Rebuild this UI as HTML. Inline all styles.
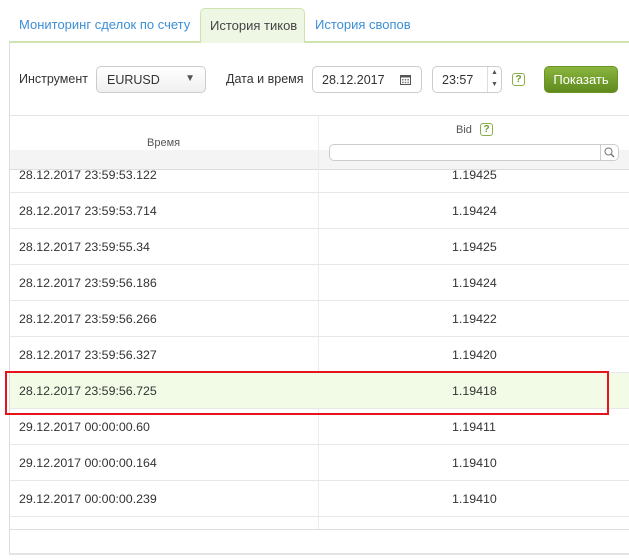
<!DOCTYPE html>
<html><head><meta charset="utf-8"><style>
*{box-sizing:border-box;margin:0;padding:0}
body{width:629px;height:560px;overflow:hidden;background:#fff;font-family:"Liberation Sans",Arial,sans-serif;font-size:12px;color:#333;position:relative}
.a{position:absolute;white-space:nowrap}
.tab{position:absolute;top:8px;height:34px;line-height:34px;font-size:13px;color:#3d8fd6;padding:0 10px;white-space:nowrap}
.in{position:absolute;border:1px solid #ccc;border-radius:5px;background:#fff;font-size:12.5px;color:#333;white-space:nowrap}
.row{position:absolute;left:10px;width:640px;height:36px;border-bottom:1px solid #e8e8e8;font-size:12.4px;color:#333}
.row span{position:absolute;top:0;line-height:36px;white-space:nowrap}
.q{position:absolute;width:13px;height:13px;border:1px solid #8ab04a;border-radius:3px;color:#6e9a2e;font-size:10px;line-height:11px;text-align:center;font-weight:bold}
</style></head><body>
<div class="a" style="left:9px;top:41px;width:640px;height:2px;background:#cfe3b0"></div>
<div class="tab" style="left:9px">Мониторинг сделок по счету</div>
<div class="tab" style="left:200px;width:105px;background:#eef6e4;border:1px solid #cfe3b0;border-bottom:none;border-radius:5px 5px 0 0;color:#444;height:35px;padding:0 9px">История тиков</div>
<div class="tab" style="left:305px">История свопов</div>
<div class="a" style="left:9px;top:43px;width:1px;height:512px;background:#ddd"></div>
<div class="a" style="left:9px;top:553px;width:640px;height:2px;background:#e4e4e4"></div>

<div class="a" style="left:19px;top:72px;font-size:12.5px">Инструмент</div>
<div class="in" style="left:96px;top:66px;width:110px;height:27px;background:linear-gradient(#fff,#f0f0f0);padding:6px 10px">EURUSD<span class="a" style="right:10px;top:6px;font-size:10px;color:#555">▼</span></div>
<div class="a" style="left:226px;top:72px;font-size:12.5px">Дата и время</div>
<div class="in" style="left:312px;top:66px;width:110px;height:27px;padding:6px 9px">28.12.2017
<svg class="a" style="left:87px;top:7px" width="11" height="11" viewBox="0 0 11 11"><rect x="0.5" y="1.5" width="10" height="9" fill="#fff" stroke="#555"/><rect x="0.5" y="1.5" width="10" height="2" fill="#555"/><g fill="#777"><rect x="2" y="5" width="1.5" height="1.5"/><rect x="4.7" y="5" width="1.5" height="1.5"/><rect x="7.4" y="5" width="1.5" height="1.5"/><rect x="2" y="7.7" width="1.5" height="1.5"/><rect x="4.7" y="7.7" width="1.5" height="1.5"/><rect x="7.4" y="7.7" width="1.5" height="1.5"/></g></svg></div>
<div class="in" style="left:432px;top:66px;width:70px;height:27px;padding:6px 9px">23:57
<div class="a" style="right:0;top:0;width:14px;height:25px;border-left:1px solid #ddd;font-size:7px;color:#555;text-align:center;line-height:12px">▲<br>▼</div></div>
<div class="q" style="left:512px;top:73px">?</div>
<div class="a" style="left:544px;top:66px;width:74px;height:27px;border-radius:5px;background:linear-gradient(#8ab53e,#5f8a1e);border:1px solid #6a9526;color:#fff;font-size:13px;text-align:center;line-height:25px">Показать</div>

<div class="a" style="left:10px;top:115px;width:640px;height:1px;background:#e4e4e4"></div>
<div class="a" style="left:10px;top:150px;width:640px;height:19px;background:#f4f4f4"></div>
<div class="a" style="left:10px;top:169px;width:640px;height:1px;background:#ddd"></div>
<div class="a" style="left:318px;top:115px;width:1px;height:414px;background:#ececec"></div>
<div class="a" style="left:147px;top:137px;font-size:11px;color:#555">Время</div>
<div class="a" style="left:456px;top:124px;font-size:11px;color:#555">Bid</div>
<div class="q" style="left:480px;top:123px">?</div>
<div class="a" style="left:329px;top:144px;width:290px;height:17px;border:1px solid #ccc;border-radius:5px;background:#fff"></div>
<div class="a" style="left:600px;top:144px;width:1px;height:17px;background:#ccc"></div>
<svg class="a" style="left:604px;top:147px" width="11" height="11" viewBox="0 0 11 11"><circle cx="4.5" cy="4.5" r="3.5" fill="none" stroke="#777"/><path d="M7 7l3 3" stroke="#777" stroke-width="1.5"/></svg>

<div class="row" style="top:169px;height:24px"><span style="left:9px;line-height:12px">28.12.2017 23:59:53.122</span><span style="left:442px;line-height:12px">1.19425</span></div>
<div class="row" style="top:193px"><span style="left:9px">28.12.2017 23:59:53.714</span><span style="left:442px">1.19424</span></div>
<div class="row" style="top:229px"><span style="left:9px">28.12.2017 23:59:55.34</span><span style="left:442px">1.19425</span></div>
<div class="row" style="top:265px"><span style="left:9px">28.12.2017 23:59:56.186</span><span style="left:442px">1.19424</span></div>
<div class="row" style="top:301px"><span style="left:9px">28.12.2017 23:59:56.266</span><span style="left:442px">1.19422</span></div>
<div class="row" style="top:337px"><span style="left:9px">28.12.2017 23:59:56.327</span><span style="left:442px">1.19420</span></div>
<div class="row" style="top:373px;background:#f1fbe6"><span style="left:9px">28.12.2017 23:59:56.725</span><span style="left:442px">1.19418</span></div>
<div class="row" style="top:409px"><span style="left:9px">29.12.2017 00:00:00.60</span><span style="left:442px">1.19411</span></div>
<div class="row" style="top:445px"><span style="left:9px">29.12.2017 00:00:00.164</span><span style="left:442px">1.19410</span></div>
<div class="row" style="top:481px"><span style="left:9px">29.12.2017 00:00:00.239</span><span style="left:442px">1.19410</span></div>
<div class="a" style="left:10px;top:529px;width:640px;height:1px;background:#ddd"></div>
<div class="a" style="left:5px;top:371px;width:604px;height:44px;border:2px solid #e8141b"></div>
</body></html>
